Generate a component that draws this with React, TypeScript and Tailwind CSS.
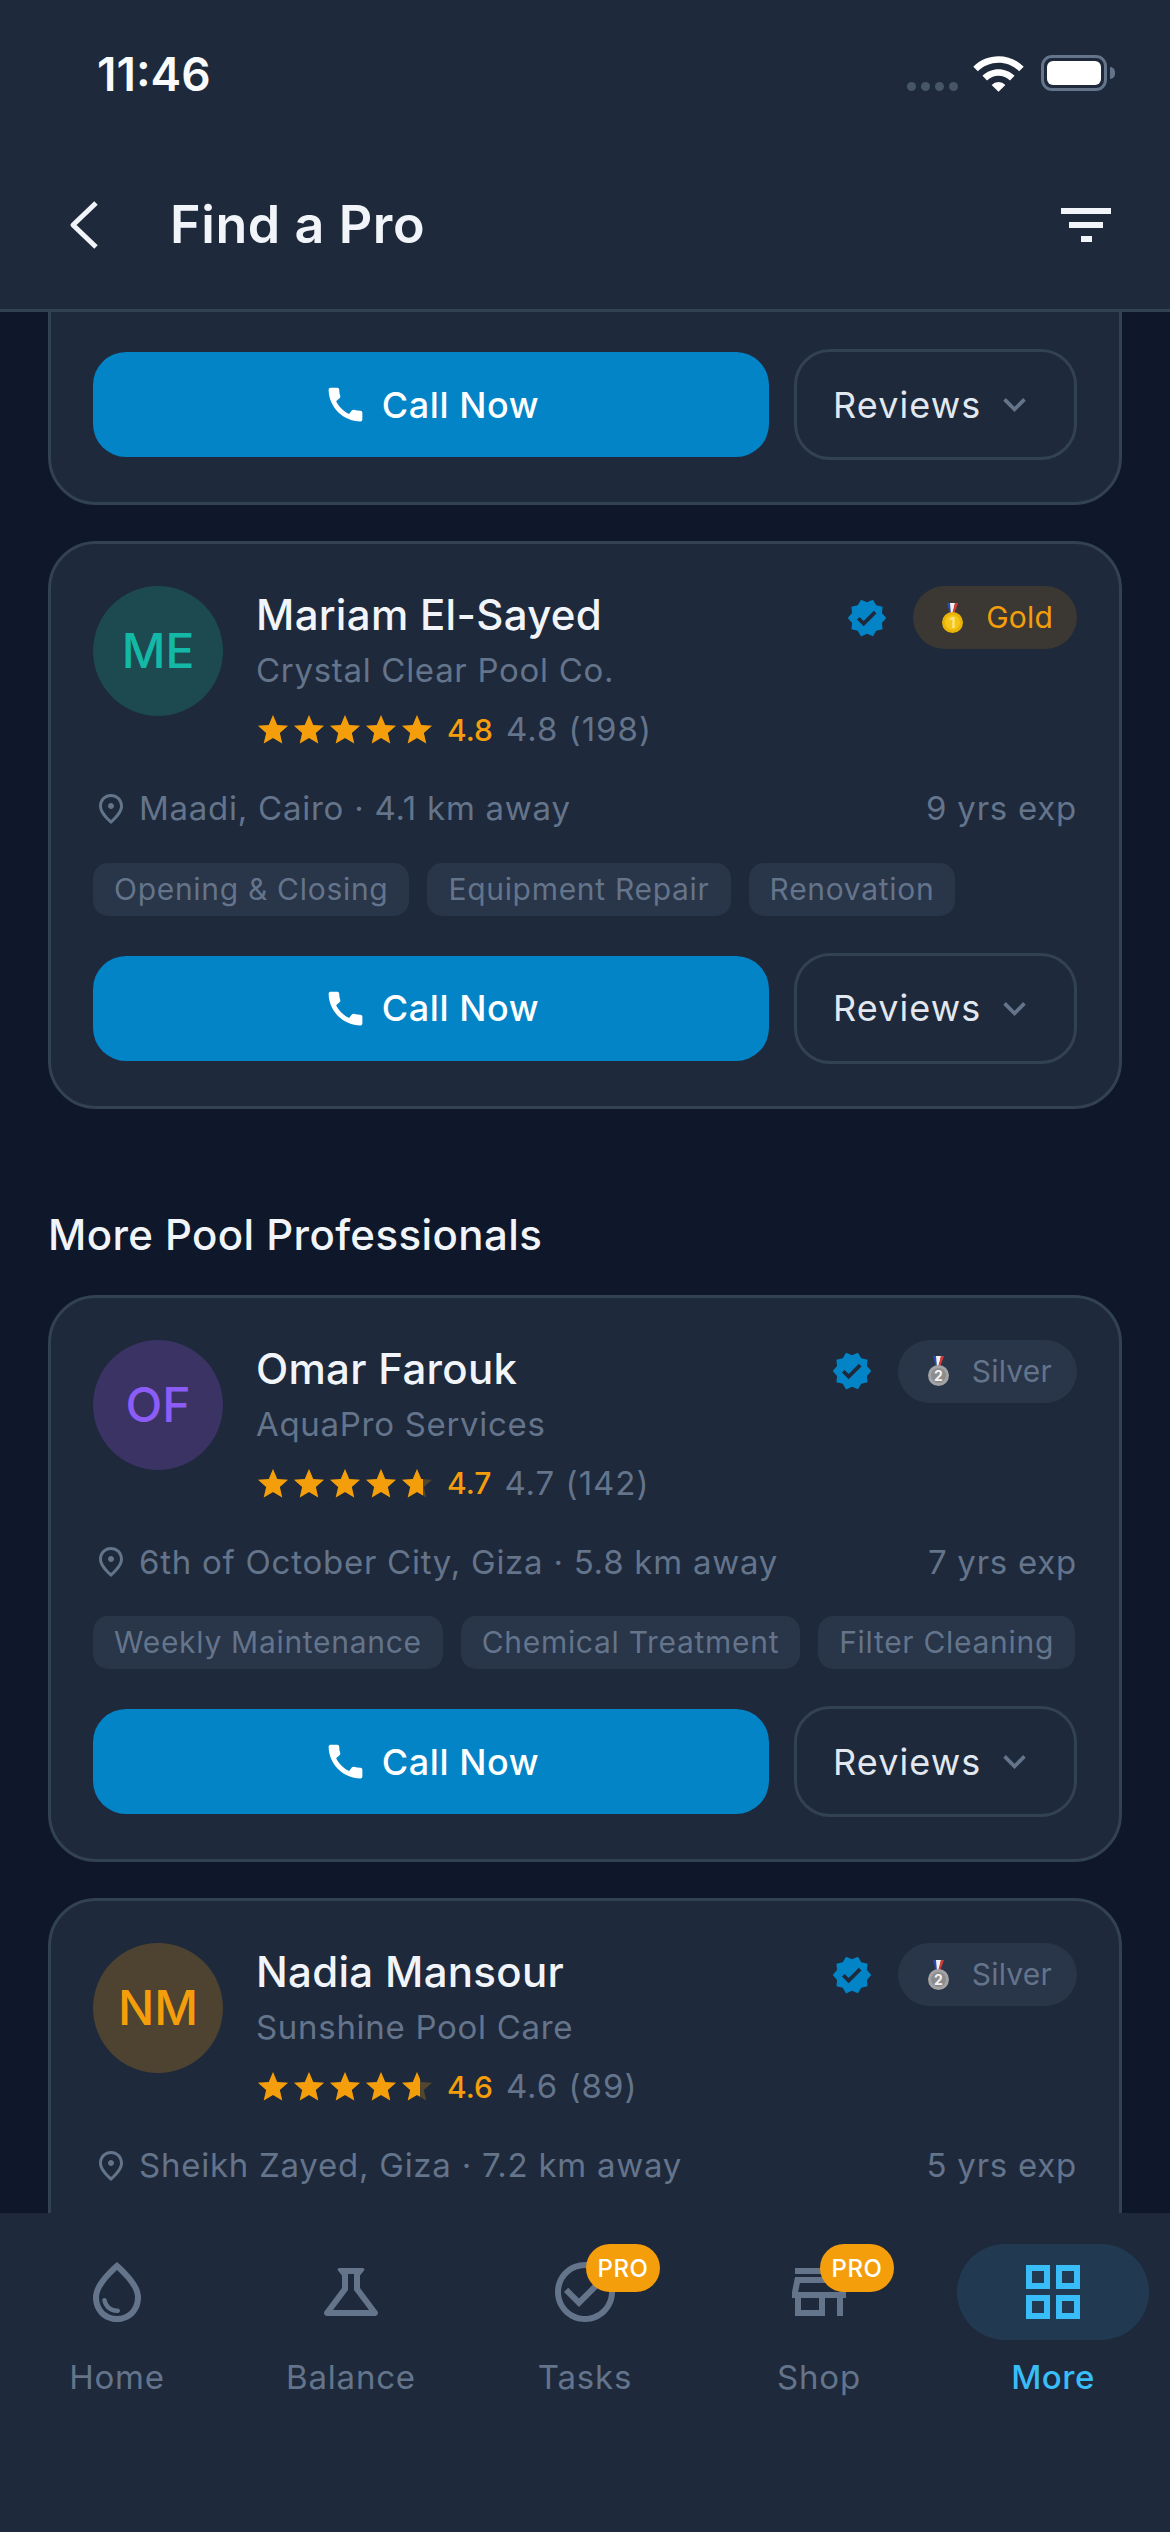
import React from "react";
import {
  MdCall,
  MdCheckCircleOutline,
  MdKeyboardArrowDown,
  MdOutlineGridView,
  MdOutlinePlace,
  MdOutlineScience,
  MdOutlineStore,
  MdOutlineWaterDrop,
  MdStar,
  MdVerified,
  MdWifi,
} from "react-icons/md";

type Pro = {
  initials: string;
  avatar: string;
  name: string;
  company: string;
  rating: number;
  reviews: number;
  location: string;
  years: number;
  tier: "Gold" | "Silver";
  tags?: string[];
};

const mariam: Pro = {
  initials: "ME",
  avatar: "bg-[#1c4a50] text-[#14b8a6]",
  name: "Mariam El-Sayed",
  company: "Crystal Clear Pool Co.",
  rating: 4.8,
  reviews: 198,
  location: "Maadi, Cairo · 4.1 km away",
  years: 9,
  tier: "Gold",
  tags: ["Opening & Closing", "Equipment Repair", "Renovation"],
};

const omar: Pro = {
  initials: "OF",
  avatar: "bg-[#3a3364] text-[#8b5cf6]",
  name: "Omar Farouk",
  company: "AquaPro Services",
  rating: 4.7,
  reviews: 142,
  location: "6th of October City, Giza · 5.8 km away",
  years: 7,
  tier: "Silver",
  tags: ["Weekly Maintenance", "Chemical Treatment", "Filter Cleaning"],
};

const nadia: Pro = {
  initials: "NM",
  avatar: "bg-[#4d4330] text-[#f59e0b]",
  name: "Nadia Mansour",
  company: "Sunshine Pool Care",
  rating: 4.6,
  reviews: 89,
  location: "Sheikh Zayed, Giza · 7.2 km away",
  years: 5,
  tier: "Silver",
};

const Medal = ({ tier }: { tier: Pro["tier"] }) => {
  const gold = tier === "Gold";
  return (
    <svg width="21" height="30" viewBox="0 0 21 30" className="shrink-0">
      <path d="M5 0h3l3 11H8z" fill="#2b4bb0" />
      <path d="M8 0h5l-2 11H9z" fill="#f1f1f1" />
      <path d="M13 0h3l-4 11h-2z" fill="#d43a3a" />
      <circle cx="10.5" cy="19.5" r="10.5" fill={gold ? "#eab308" : "#a3a3a3"} />
      <circle cx="10.5" cy="19.5" r="7.5" fill={gold ? "#f5c518" : "#8c8c8c"} />
      <text x="10.5" y="25" textAnchor="middle" fontSize="14" fontWeight="700" fill={gold ? "#fde68a" : "#f1f1f1"}>
        {gold ? "1" : "2"}
      </text>
    </svg>
  );
};

const Stars = ({ rating }: { rating: number }) => (
  <div className="flex -ml-[1px]">
    {[0, 1, 2, 3, 4].map((i) => {
      // only the last star is ever partial here
      const frac = rating - i >= 1 ? 1 : rating - i;
      const width = i === 4 && rating >= 4.8 ? 100 : frac * 100 * 0.95;
      return (
        <span key={i} className="relative block w-[36px] h-[36px]">
          <MdStar size={36} className="text-[#f59e0b]/25" />
          <span className="absolute left-0 top-0 h-full overflow-hidden" style={{ width: `${i < 4 ? 100 : width}%` }}>
            <MdStar size={36} className="text-[#f59e0b]" />
          </span>
        </span>
      );
    })}
  </div>
);

const TierBadge = ({ tier }: { tier: Pro["tier"] }) =>
  tier === "Gold" ? (
    <div className="flex items-center h-[63px] pl-[29px] pr-[24px] gap-[23px] rounded-full bg-[#3b3733] text-[#f59e0b] text-[30px] tracking-[0.2px]">
      <Medal tier={tier} />
      <span>Gold</span>
    </div>
  ) : (
    <div className="flex items-center h-[63px] pl-[30px] pr-[25px] gap-[23px] rounded-full bg-[#293548] text-[#64748b] text-[30px] tracking-[0.2px]">
      <Medal tier={tier} />
      <span>Silver</span>
    </div>
  );

const Actions = () => (
  <div className="flex items-center gap-[25px]">
    <button className="flex-1 h-[105px] flex items-center justify-center gap-[14px] rounded-[33px] bg-[#0284c7] text-white text-[36px] tracking-[0.6px] font-medium">
      <MdCall size={45} />
      <span>Call Now</span>
    </button>
    <button className="w-[283px] h-[111px] flex items-center pl-[36px] gap-[11px] rounded-[36px] border-[3px] border-[#334155] text-[#e2e8f0] text-[36px] tracking-[1.1px]">
      <span>Reviews</span>
      <MdKeyboardArrowDown size={45} className="text-[#64748b]" />
    </button>
  </div>
);

const ProCard = ({ pro }: { pro: Pro }) => (
  <div className={`shrink-0 border-[3px] border-[#334155] bg-[#1e293b] rounded-[48px] px-[42px] pt-[42px] ${pro.tags ? "pb-[42px]" : "pb-[200px]"}`}>
    <div className="flex items-start">
      <div className={`w-[130px] h-[130px] rounded-full flex items-center justify-center text-[48px] font-medium ${pro.avatar}`}>
        {pro.initials}
      </div>
      <div className="flex-1 ml-[33px] flex flex-col">
        <div className="h-[58px] text-[42px] leading-[58px] tracking-[0.3px] font-medium text-[#f1f5f9]">{pro.name}</div>
        <div className="h-[44px] mt-[4px] text-[33px] leading-[44px] tracking-[0.7px] text-[#64748b]">{pro.company}</div>
        <div className="flex items-center h-[36px] mt-[20px]">
          <Stars rating={pro.rating} />
          <span className="ml-[12px] text-[30px] font-medium text-[#f59e0b]">{pro.rating}</span>
          <span className="ml-[13px] text-[33px] tracking-[1px] text-[#64748b]">
            {pro.rating} ({pro.reviews})
          </span>
        </div>
      </div>
      <div className="flex items-center gap-[25px]">
        <MdVerified size={42} className="text-[#0284c7]" />
        <TierBadge tier={pro.tier} />
      </div>
    </div>
    <div className="flex items-center justify-between mt-[36px] text-[33px] tracking-[0.75px] text-[#64748b]">
      <div className="flex items-center gap-[10px]">
        <MdOutlinePlace size={36} />
        <span>{pro.location}</span>
      </div>
      <span>{pro.years} yrs exp</span>
    </div>
    {pro.tags && (
      <>
        <div className="flex gap-[18px] mt-[29px]">
          {pro.tags.map((t) => (
            <span key={t} className="h-[53px] px-[21px] rounded-[15px] bg-[#293548] text-[#64748b] text-[30px] leading-[53px] tracking-[0.7px] whitespace-nowrap">
              {t}
            </span>
          ))}
        </div>
        <div className="mt-[37px]">
          <Actions />
        </div>
      </>
    )}
  </div>
);

const NavItem = ({ icon, label, pro, active }: { icon: React.ReactNode; label: string; pro?: boolean; active?: boolean }) => (
  <div className={`flex-1 flex flex-col items-center ${active ? "text-[#38bdf8]" : "text-[#64748b]"}`}>
    <div className={`w-[192px] h-[96px] rounded-[48px] flex items-center justify-center ${active ? "bg-[#213a52]" : ""}`}>
      <div className="relative w-[72px] h-[72px]">
        {icon}
        {pro && (
          <span className="absolute -right-[39px] -top-[12px] w-[74px] h-[48px] rounded-[24px] bg-[#f59e0b] text-white text-[24px] tracking-[0.6px] font-medium leading-[50px] text-center">
            PRO
          </span>
        )}
      </div>
    </div>
    <span className={`mt-[17px] text-[33px] leading-[40px] ${active ? "font-medium tracking-[0.5px]" : "tracking-[0.8px]"}`}>{label}</span>
  </div>
);

export default function App() {
  return (
    <div className="w-[1170px] h-[2532px] flex flex-col overflow-hidden bg-[#0f172a] [font-family:Inter,sans-serif]">
      <header className="shrink-0 h-[312px] bg-[#1e293b] border-b-[3px] border-[#334155]">
        <div className="h-[146px] pl-[97px] pr-[55px] flex items-center justify-between">
          <span className="mt-[2px] text-[46px] font-semibold text-[#f8fafc]">11:46</span>
          <div className="flex items-center">
            <div className="flex gap-[5px] mt-[26px] mr-[13px]">
              {[0, 1, 2, 3].map((i) => (
                <span key={i} className="w-[9px] h-[9px] rounded-full bg-[#475569]" />
              ))}
            </div>
            <MdWifi size={55} className="text-white" />
            <div className="ml-[15px] w-[66px] h-[36px] rounded-[11px] border-[3px] border-[#64748b] p-[3px]">
              <div className="w-full h-full rounded-[6px] bg-white" />
            </div>
            <span className="ml-[3px] w-[5px] h-[12px] rounded-r-full bg-[#64748b]" />
          </div>
        </div>
        <div className="h-[158px] flex items-center pl-[69px] pr-[59px]">
          <svg width="30" height="48" viewBox="0 0 30 48" fill="none" stroke="#f1f5f9" strokeWidth="5" strokeLinejoin="round">
            <path d="M27 2L4 24l23 22" />
          </svg>
          <h1 className="ml-[71px] flex-1 text-[52px] tracking-[0.6px] font-semibold text-[#f1f5f9]">Find a Pro</h1>
          <div className="flex flex-col items-center gap-[8px]">
            <span className="w-[50px] h-[6px] bg-[#f1f5f9]" />
            <span className="w-[34px] h-[6px] bg-[#f1f5f9]" />
            <span className="w-[11px] h-[6px] bg-[#f1f5f9]" />
          </div>
        </div>
      </header>

      <main className="flex-1 min-h-0 overflow-hidden px-[48px]">
        <div className="-mt-[100px] flex flex-col">
          <div className="border-[3px] border-[#334155] bg-[#1e293b] rounded-[48px] px-[42px] pt-[44px] pb-[42px]">
            <div className="flex gap-[18px]">
              <span className="w-[291px] h-[53px] rounded-[15px] bg-[#293548]" />
              <span className="w-[340px] h-[53px] rounded-[15px] bg-[#293548]" />
            </div>
            <div className="mt-[37px]">
              <Actions />
            </div>
          </div>
          <div className="h-[36px] shrink-0" />
          <ProCard pro={mariam} />
          <h2 className="mt-[100px] mb-[35px] text-[42px] leading-[51px] tracking-[0.4px] font-medium text-[#f1f5f9]">More Pool Professionals</h2>
          <ProCard pro={omar} />
          <div className="h-[36px] shrink-0" />
          <ProCard pro={nadia} />
        </div>
      </main>

      <nav className="shrink-0 h-[319px] pt-[31px] bg-[#1e293b] flex">
        <NavItem icon={<MdOutlineWaterDrop size={72} />} label="Home" />
        <NavItem icon={<MdOutlineScience size={72} />} label="Balance" />
        <NavItem icon={<MdCheckCircleOutline size={72} />} label="Tasks" pro />
        <NavItem icon={<MdOutlineStore size={72} />} label="Shop" pro />
        <NavItem icon={<MdOutlineGridView size={72} />} label="More" active />
      </nav>
    </div>
  );
}
